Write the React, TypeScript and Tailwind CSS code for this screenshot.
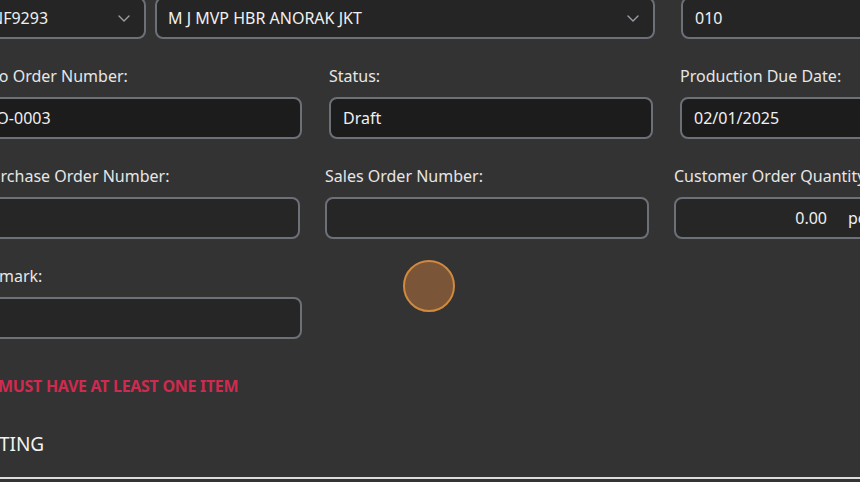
function Chevron() {
  return (
    <svg width="12" height="7" viewBox="0 0 12 7" fill="none" className="shrink-0">
      <polyline points="1,1 6,6 11,1" stroke="#9b9ea3" strokeWidth="1.4" strokeLinecap="round" strokeLinejoin="round" />
    </svg>
  );
}

function Select({ value, className }: { value: string; className: string }) {
  return (
    <div className={`flex h-[42px] shrink-0 items-center justify-between rounded-lg border-2 border-[#6c7077] bg-[#252525] pl-[11px] pr-[14px] text-[16px] text-[#f0f0f0] ${className}`}>
      <span className="whitespace-nowrap">{value}</span>
      <Chevron />
    </div>
  );
}

function Field({
  label,
  value = '',
  width,
  dark = false,
  suffix,
}: {
  label: string;
  value?: string;
  width: string;
  dark?: boolean;
  suffix?: string;
}) {
  return (
    <div className={`flex shrink-0 flex-col ${width}`}>
      <label className="whitespace-nowrap text-[16px] leading-5 text-[#e6e6e6]">{label}</label>
      <div
        className={`mt-[11px] flex h-[42px] items-center rounded-lg border-2 border-[#6c7077] px-3 text-[16px] text-[#f0f0f0] ${
          dark ? 'bg-[#1c1c1d]' : 'bg-[#262627]'
        }`}
      >
        {suffix ? (
          <>
            <span className="w-[139px] shrink-0 text-right">{value}</span>
            <span className="ml-[21px] whitespace-nowrap">{suffix}</span>
          </>
        ) : (
          <span className="whitespace-nowrap">{value}</span>
        )}
      </div>
    </div>
  );
}

export default function App() {
  return (
    <div className="relative h-[482px] w-[860px] overflow-hidden bg-[#333333] font-['Noto_Sans',sans-serif]">
      <div className="-ml-[22px] -mt-[3px] flex w-[1100px] flex-col">
        {/* Style / description / size */}
        <div className="flex">
          <Select value="NF9293" className="w-[168px]" />
          <Select value="M J MVP HBR ANORAK JKT" className="ml-[9px] w-[500px]" />
          <div className="ml-[26px] flex h-[42px] w-[300px] shrink-0 items-center rounded-lg border-2 border-[#6c7077] bg-[#252525] px-3 text-[16px] text-[#f0f0f0]">
            010
          </div>
        </div>

        <div className="mt-[27px] flex gap-[27px]">
          <Field label="Info Order Number:" value="JO-0003" width="w-[324px]" dark />
          <Field label="Status:" value="Draft" width="w-[324px]" dark />
          <Field label="Production Due Date:" value="02/01/2025" width="w-[300px]" dark />
        </div>

        <div className="mt-[27px] ml-[3px] flex gap-[25px]">
          <Field label="Purchase Order Number:" width="w-[319px]" />
          <Field label="Sales Order Number:" width="w-[324px]" />
          <Field label="Customer Order Quantity:" value="0.00" suffix="pcs" width="w-[300px]" />
        </div>

        <div className="mt-[27px] ml-[2px] flex">
          <Field label="Remark:" width="w-[322px]" />
        </div>

        <p className="mt-[37px] ml-[20px] whitespace-nowrap text-[16px] font-bold leading-5 tracking-[-0.3px] text-[#cf2a4f]">
          MUST HAVE AT LEAST ONE ITEM
        </p>

        <h3 className="mt-[36px] -ml-[16px] text-[19px] leading-6 text-[#f2f2f2]">COSTING</h3>
        <div className="mt-[21px] h-[2px] bg-[#dcdcdc]" />
      </div>

      {/* touch indicator */}
      <div className="absolute left-[403px] top-[260px] h-[52px] w-[52px] rounded-full border-2 border-[#d0893f] bg-[#7a5538]" />
    </div>
  );
}
